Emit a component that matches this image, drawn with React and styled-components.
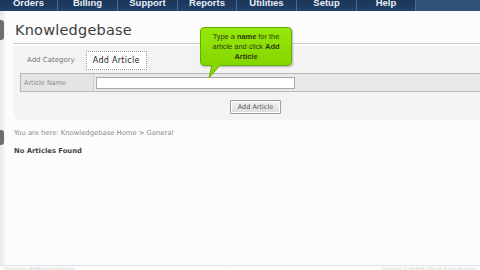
import React from 'react'
import styled, { createGlobalStyle } from 'styled-components'

const GlobalStyle = createGlobalStyle`
    html, body {
        margin: 0;
        padding: 0;
        background: #fcfcfc;
        overflow: hidden;
    }
    body {
        font-family: "DejaVu Sans", Verdana, sans-serif;
        color: #333;
    }
`

const Page = styled.div`
    position: relative;
    width: 480px;
    height: 270px;
    overflow: hidden;
    display: flex;
    flex-direction: column;
`

const NavBar = styled.div`
    display: flex;
    height: 11px;
    background: #30507a;
    overflow: hidden;
`

const NavTab = styled.div`
    width: ${(props) => props.width}px;
    height: 11px;
    flex: none;
    display: flex;
    align-items: flex-end;
    justify-content: center;
    background: linear-gradient(#1a3556, #22406a);
    border-right: 1px solid #4d6a8c;
    color: #e8eef6;
    font-family: "Liberation Sans", Arial, sans-serif;
    font-weight: bold;
    font-size: 9.5px;
    line-height: 10px;
    padding-bottom: 3px;
    box-sizing: border-box;
`

const Body = styled.div`
    flex: 1;
    display: flex;
    min-height: 0;
`

const Rail = styled.div`
    width: 5px;
    flex: none;
    display: flex;
    flex-direction: column;
    background: linear-gradient(90deg, #e9e9e9, #f4f4f4);
    margin-bottom: 4px;
`

const RailHandle = styled.div`
    width: 4px;
    height: ${(props) => props.height}px;
    margin-top: ${(props) => props.top}px;
    background: #6e6e6e;
    border-radius: 0 3px 3px 0;
`

const Main = styled.div`
    flex: 1;
    display: flex;
    flex-direction: column;
    padding: 9px 0 0 9px;
    min-width: 0;
`

const Title = styled.h1`
    margin: 0;
    font-family: "DejaVu Sans", Verdana, sans-serif;
    font-weight: normal;
    font-size: 14.5px;
    line-height: 19px;
    letter-spacing: 0.2px;
    color: #3c3c3c;
    padding: 1px 0 3px 1px;
    border-bottom: 1px solid #c8c8c8;
`

const Panel = styled.div`
    margin-top: 2px;
    background: #f3f3f3;
    border-radius: 0 0 0 5px;
    padding: 5px 0 6px 6px;
    display: flex;
    flex-direction: column;
`

const TabRow = styled.div`
    display: flex;
    align-items: center;
    gap: 10px;
    height: 19px;
`

const Tab = styled.div`
    font-size: ${(props) => (props.active ? '8px' : '7px')};
    color: ${(props) => (props.active ? '#222' : '#777')};
    letter-spacing: ${(props) => (props.active ? '0.3px' : '0')};
    padding: ${(props) => (props.active ? '4px 6px' : '4px 0 4px 6px')};
    background: ${(props) => (props.active ? '#fff' : 'transparent')};
    border: 1px ${(props) => (props.active ? 'dotted #9a9a9a' : 'solid transparent')};
    line-height: 9px;
`

const FormRow = styled.div`
    display: flex;
    align-items: center;
    height: 19px;
    margin-top: 3px;
    background: #e9e9e9;
    border: 1px solid #b8b8b8;
    border-right: none;
    box-sizing: border-box;
`

const Label = styled.div`
    width: 73px;
    height: 100%;
    display: flex;
    align-items: center;
    padding-left: 3px;
    box-sizing: border-box;
    font-size: 6.5px;
    color: #8a8a8a;
    background: #e4e4e4;
    border-right: 1px solid #d0d0d0;
`

const Input = styled.input`
    width: 199px;
    height: 12px;
    margin-left: 2px;
    padding: 0;
    box-sizing: border-box;
    border: 1px solid #a8a8a8;
    background: #fff;
    outline: none;
`

const ButtonRow = styled.div`
    display: flex;
    padding: 8px 0 0 210px;
`

const Button = styled.button`
    width: 51px;
    height: 14px;
    padding: 0;
    font-family: "DejaVu Sans", Verdana, sans-serif;
    font-size: 6.5px;
    color: #555;
    background: linear-gradient(#f4f4f4, #dcdcdc);
    border: 1px solid #9c9c9c;
    border-radius: 1px;
    box-shadow: inset 0 0 0 1px #fff;
`

const Breadcrumb = styled.div`
    margin-top: 9px;
    font-size: 6.8px;
    line-height: 9px;
    color: #8a8a8a;
`

const Empty = styled.div`
    margin-top: 9px;
    font-size: 6.8px;
    line-height: 9px;
    font-weight: bold;
    color: #444;
`

const Footer = styled.div`
    position: absolute;
    left: 0;
    right: 0;
    bottom: 0;
    height: 4px;
    border-top: 1px solid #e2e2e2;
    display: flex;
    justify-content: space-between;
    font-size: 4px;
    color: #d4d4d4;
    overflow: hidden;
    padding: 0 4px;
`

const Tooltip = styled.div`
    position: absolute;
    left: 200px;
    top: 27px;
    width: 92px;
    height: 39px;
    box-sizing: border-box;
    background: linear-gradient(#96e80a, #84d600);
    border: 1px solid #68ac00;
    border-radius: 4px;
    box-shadow: 1px 1px 2px rgba(0, 0, 0, 0.25);
    font-family: "Liberation Sans", Arial, sans-serif;
    font-size: 7.4px;
    line-height: 10px;
    color: #2a3a10;
    text-align: center;
    padding-top: 4px;
`

const Tail = styled.svg`
    position: absolute;
    left: 5px;
    top: 37px;
`

const tabs = [
    ['Orders', 58],
    ['Billing', 60],
    ['Support', 60],
    ['Reports', 59],
    ['Utilities', 60],
    ['Setup', 60],
    ['Help', 59],
]

export default function App() {
    return (
        <Page>
            <GlobalStyle />
            <NavBar>
                {tabs.map(([label, width]) => (
                    <NavTab key={label} width={width}>
                        {label}
                    </NavTab>
                ))}
            </NavBar>
            <Body>
                <Rail>
                    <RailHandle top={9} height={20} />
                    <RailHandle top={90} height={15} />
                </Rail>
                <Main>
                    <Title>Knowledgebase</Title>
                    <Panel>
                        <TabRow>
                            <Tab>Add Category</Tab>
                            <Tab active>Add Article</Tab>
                        </TabRow>
                        <FormRow>
                            <Label>Article Name</Label>
                            <Input />
                        </FormRow>
                        <ButtonRow>
                            <Button>Add Article</Button>
                        </ButtonRow>
                    </Panel>
                    <Breadcrumb>You are here: Knowledgebase Home &gt; General</Breadcrumb>
                    <Empty>No Articles Found</Empty>
                </Main>
            </Body>
            <Tooltip>
                Type a <b>name</b> for the
                <br />
                article and click <b>Add</b>
                <br />
                <b>Article</b>
                <Tail width="16" height="14" viewBox="0 0 16 14">
                    <path d="M6 0 L3 13 L14 0 Z" fill="#86d800" stroke="#68ac00" strokeWidth="1" />
                    <rect x="5.5" y="-1" width="8" height="2" fill="#86d800" />
                </Tail>
            </Tooltip>
            <Footer>
                <span>Powered by WHMCompleteSolution</span>
                <span>·</span>
                <span>Copyright © WHMCS 2009 All Rights Reserved</span>
            </Footer>
        </Page>
    )
}
